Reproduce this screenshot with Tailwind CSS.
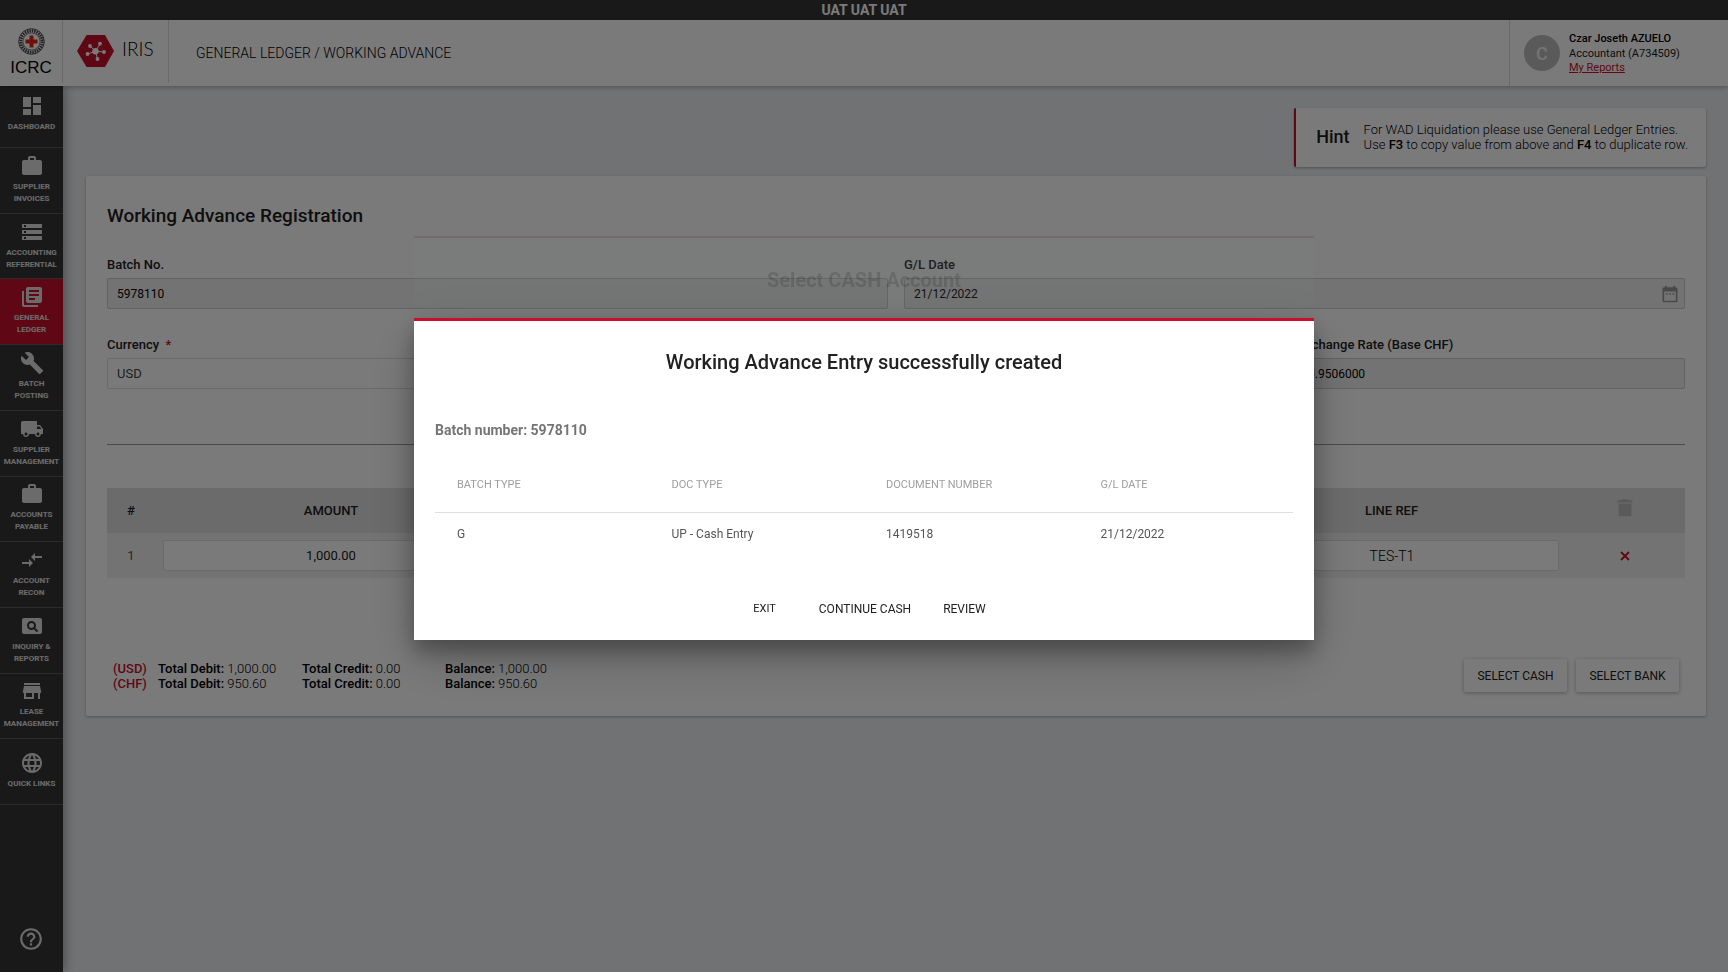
<!DOCTYPE html>
<html lang="en">
<head>
<meta charset="utf-8">
<title>IRIS - Working Advance</title>
<meta name="viewport" content="width=device-width, initial-scale=1">
<script src="https://cdn.jsdelivr.net/npm/@tailwindcss/browser@4"></script>
</head>
<body class="flex min-h-screen flex-col bg-[#edeff3] font-[Roboto,sans-serif] text-[13px] text-[#212121]">

<div class="flex h-5 items-center justify-center bg-[#363636] text-[14px] leading-5 font-bold text-white">UAT UAT UAT</div>

<header class="relative z-10 flex h-[66px] bg-white shadow-[0_1px_5px_rgba(0,0,0,0.3)]">
  <a href="#" class="flex h-[63px] w-[63px] flex-col items-center border-r border-[#dddddd] pt-[8px] text-black" aria-label="ICRC">
    <svg class="h-[27px] w-[27px]" viewBox="0 0 27 27" fill="none">
      <circle cx="13.500" cy="13.500" r="12.800" stroke="#555" stroke-width="1"/>
      <circle cx="13.500" cy="13.500" r="10.700" stroke="#444" stroke-width="3" stroke-dasharray="1.500 0.900"/>
      <circle cx="13.500" cy="13.500" r="8.600" stroke="#555" stroke-width="0.800" fill="#fff"/>
      <path d="M11.500 7.500h4v4h4v4h-4v4h-4v-4h-4v-4h4z" fill="#e2231a"/>
    </svg>
    <span class="mt-[3px] font-['Liberation_Sans',sans-serif] text-[17px] leading-5">ICRC</span>
  </a>
  <a href="#" class="flex h-[63px] w-[106px] items-center gap-[8px] border-r border-[#dddddd] pb-px pl-[14px]">
    <svg class="h-[32px] w-[37px]" viewBox="0 0 37 32">
      <path d="M9.500 0h18.500L37 16l-9 16H9.500L0 16z" fill="#c8102e"/>
      <g stroke="#fff" stroke-width="1"><path d="M18.500 16.200 13 11M18.500 16.200 23 9M18.500 16.200 27 17M18.500 16.200 20.500 24M18.500 16.200 10.500 19"/></g>
      <g fill="#fff"><circle cx="18.500" cy="16.200" r="3.200"/><circle cx="13" cy="11" r="1.900"/><circle cx="23" cy="8.700" r="1.900"/><circle cx="27" cy="17" r="1.900"/><circle cx="20.500" cy="24" r="1.900"/><circle cx="10.500" cy="19" r="1.900"/></g>
    </svg>
    <span class="pb-1 font-[Lato,sans-serif] text-[19px] font-light leading-6 text-black">IRIS</span>
  </a>
  <h1 class="flex flex-1 items-center pl-[27px] text-[14px] font-light text-black">GENERAL LEDGER / WORKING ADVANCE</h1>
  <div class="flex w-[219px] items-center gap-[9px] border-l border-[#dddddd] pl-[14px]">
    <div class="flex h-9 w-9 items-center justify-center rounded-full bg-[#bdbdbd] text-[18px] font-medium text-[#f0f0f0]">C</div>
    <div class="text-[11px] leading-[15px]">
      <div class="font-medium text-black">Czar Joseth AZUELO</div>
      <div>Accountant (A734509)</div>
      <a href="#" class="block leading-[14px] text-[#c8102e] underline">My Reports</a>
    </div>
  </div>
</header>

<div class="flex flex-1">
  <nav class="flex w-[63px] shrink-0 flex-col bg-[#363636] text-center text-[8px] leading-[12px] font-bold text-[#e0e0e0] shadow-[2px_0_10px_rgba(0,0,0,0.35)]">
    <a href="#" class="flex h-[62px] flex-col items-center justify-center gap-[3px] border-b border-[#5a5a5a] pb-[6px]">
      <svg class="h-6 w-6" viewBox="0 0 24 24" fill="currentColor"><path d="M3 13h8V3H3v10zm0 8h8v-6H3v6zm10 0h8V11h-8v10zm0-18v6h8V3h-8z"/></svg>
      DASHBOARD
    </a>
    <div class="flex h-[657px] flex-col">
      <a href="#" class="flex flex-1 flex-col items-center justify-center gap-[3px] border-b border-[#5a5a5a] pb-[2px]">
        <svg class="h-6 w-6" viewBox="0 0 24 24" fill="currentColor"><path d="M20 6h-4V4c0-1.110-.890-2-2-2h-4c-1.110 0-2 .890-2 2v2H4c-1.110 0-1.990.890-1.990 2L2 19c0 1.110.890 2 2 2h16c1.110 0 2-.890 2-2V8c0-1.110-.890-2-2-2zm-6 0h-4V4h4v2z"/></svg>
        <span>SUPPLIER<br>INVOICES</span>
      </a>
      <a href="#" class="flex flex-1 flex-col items-center justify-center gap-[3px] border-b border-[#5a5a5a] pb-[2px]">
        <svg class="h-6 w-6" viewBox="0 0 24 24" fill="currentColor"><path d="M2 20h20v-4H2v4zm2-3h2v2H4v-2zM2 4v4h20V4H2zm4 3H4V5h2v2zm-4 7h20v-4H2v4zm2-3h2v2H4v-2z"/></svg>
        <span>ACCOUNTING<br>REFERENTIAL</span>
      </a>
      <a href="#" class="flex flex-1 flex-col items-center justify-center gap-[3px] border-b border-[#5a5a5a] bg-[#c8102e] pb-[2px]">
        <svg class="h-6 w-6" viewBox="0 0 24 24" fill="currentColor"><path d="M4 6H2v14c0 1.100.9 2 2 2h14v-2H4V6zm16-4H8c-1.100 0-2 .9-2 2v12c0 1.100.9 2 2 2h12c1.100 0 2-.9 2-2V4c0-1.100-.9-2-2-2zm-1 9H9V9h10v2zm-4 4H9v-2h6v2zm4-8H9V5h10v2z"/></svg>
        <span>GENERAL<br>LEDGER</span>
      </a>
      <a href="#" class="flex flex-1 flex-col items-center justify-center gap-[3px] border-b border-[#5a5a5a] pb-[2px]">
        <svg class="h-6 w-6" viewBox="0 0 24 24" fill="currentColor"><path d="M22.700 19l-9.100-9.100c.9-2.300.4-5-1.500-6.900-2-2-5-2.400-7.400-1.300L9 6 6 9 1.600 4.700C.4 7.100.9 10.100 2.900 12.100c1.900 1.900 4.600 2.400 6.900 1.500l9.100 9.100c.4.4 1 .4 1.400 0l2.300-2.300c.5-.4.5-1.100.1-1.400z"/></svg>
        <span>BATCH<br>POSTING</span>
      </a>
      <a href="#" class="flex flex-1 flex-col items-center justify-center gap-[3px] border-b border-[#5a5a5a] pb-[2px]">
        <svg class="h-6 w-6" viewBox="0 0 24 24" fill="currentColor"><path d="M20 8h-3V4H3c-1.100 0-2 .9-2 2v11h2c0 1.660 1.340 3 3 3s3-1.340 3-3h6c0 1.660 1.340 3 3 3s3-1.340 3-3h2v-5l-3-4zM6 18.500c-.83 0-1.500-.67-1.500-1.500s.67-1.500 1.500-1.500 1.500.67 1.500 1.500-.67 1.500-1.500 1.500zm13.500-9l1.960 2.500H17V9.500h2.500zm-1.500 9c-.83 0-1.500-.67-1.500-1.500s.67-1.500 1.500-1.500 1.500.67 1.500 1.500-.67 1.500-1.500 1.500z"/></svg>
        <span>SUPPLIER<br>MANAGEMENT</span>
      </a>
      <a href="#" class="flex flex-1 flex-col items-center justify-center gap-[3px] border-b border-[#5a5a5a] pb-[2px]">
        <svg class="h-6 w-6" viewBox="0 0 24 24" fill="currentColor"><path d="M20 6h-4V4c0-1.110-.890-2-2-2h-4c-1.110 0-2 .890-2 2v2H4c-1.110 0-1.990.890-1.990 2L2 19c0 1.110.890 2 2 2h16c1.110 0 2-.890 2-2V8c0-1.110-.890-2-2-2zm-6 0h-4V4h4v2z"/></svg>
        <span>ACCOUNTS<br>PAYABLE</span>
      </a>
      <a href="#" class="flex flex-1 flex-col items-center justify-center gap-[3px] border-b border-[#5a5a5a] pb-[2px]">
        <svg class="h-6 w-6" viewBox="0 0 24 24" fill="currentColor"><path d="M9.010 14H2v2h7.010v3L13 15l-3.990-4v3zm5.980-1v-3H22V8h-7.010V5L11 9l3.990 4z"/></svg>
        <span>ACCOUNT<br>RECON</span>
      </a>
      <a href="#" class="flex flex-1 flex-col items-center justify-center gap-[3px] border-b border-[#5a5a5a] pb-[2px]">
        <svg class="h-6 w-6" viewBox="0 0 24 24" fill="currentColor"><path d="M11.500 9C10.120 9 9 10.120 9 11.500s1.120 2.500 2.500 2.500 2.500-1.120 2.500-2.500S12.880 9 11.500 9zM20 4H4c-1.100 0-2 .9-2 2v12c0 1.100.9 2 2 2h16c1.100 0 2-.9 2-2V6c0-1.100-.9-2-2-2zm-3.210 14.210l-2.910-2.910c-.69.440-1.510.7-2.390.7C9.010 16 7 13.990 7 11.500S9.010 7 11.500 7 16 9.010 16 11.500c0 .88-.26 1.690-.7 2.390l2.910 2.900-1.420 1.420z"/></svg>
        <span>INQUIRY &amp;<br>REPORTS</span>
      </a>
      <a href="#" class="flex flex-1 flex-col items-center justify-center gap-[3px] border-b border-[#5a5a5a] pb-[2px]">
        <svg class="h-6 w-6" viewBox="0 0 24 24" fill="currentColor"><path d="M20 4H4v2h16V4zm1 10v-2l-1-5H4l-1 5v2h1v6h10v-6h4v6h2v-6h1zm-9 4H6v-4h6v4z"/></svg>
        <span>LEASE<br>MANAGEMENT</span>
      </a>
      <a href="#" class="flex flex-1 flex-col items-center justify-center gap-[3px] border-b border-[#5a5a5a] pb-[2px]">
        <svg class="h-6 w-6" viewBox="0 0 24 24" fill="currentColor"><path d="M11.990 2C6.470 2 2 6.480 2 12s4.470 10 9.990 10C17.520 22 22 17.520 22 12S17.520 2 11.990 2zm6.930 6h-2.950c-.32-1.250-.78-2.450-1.380-3.560 1.840.63 3.370 1.910 4.330 3.560zM12 4.040c.83 1.200 1.480 2.530 1.910 3.960h-3.820c.43-1.430 1.080-2.760 1.910-3.960zM4.260 14C4.100 13.360 4 12.690 4 12s.1-1.360.26-2h3.380c-.08.66-.14 1.320-.14 2s.06 1.340.14 2H4.260zm.82 2h2.950c.32 1.250.78 2.450 1.380 3.560-1.840-.63-3.370-1.900-4.330-3.560zm2.950-8H5.080c.96-1.660 2.490-2.930 4.330-3.560C8.810 5.550 8.350 6.750 8.030 8zM12 19.960c-.83-1.200-1.480-2.530-1.910-3.960h3.820c-.43 1.430-1.080 2.760-1.910 3.960zM14.340 14H9.660c-.09-.66-.16-1.320-.16-2s.07-1.350.16-2h4.680c.09.65.16 1.320.16 2s-.07 1.340-.16 2zm.25 5.560c.6-1.110 1.060-2.310 1.380-3.560h2.950c-.96 1.650-2.490 2.930-4.330 3.560zM16.360 14c.08-.66.14-1.320.14-2s-.06-1.340-.14-2h3.380c.16.64.26 1.310.26 2s-.1 1.360-.26 2h-3.380z"/></svg>
        QUICK LINKS
      </a>
    </div>
    <a href="#" class="mt-auto mb-5 flex justify-center pr-[2px]" aria-label="Help">
      <svg class="h-[26px] w-[26px]" viewBox="0 0 24 24" fill="currentColor"><path d="M11 18h2v-2h-2v2zm1-16C6.480 2 2 6.480 2 12s4.480 10 10 10 10-4.480 10-10S17.520 2 12 2zm0 18c-4.410 0-8-3.590-8-8s3.590-8 8-8 8 3.590 8 8-3.590 8-8 8zm0-14c-2.210 0-4 1.790-4 4h2c0-1.100.9-2 2-2s2 .9 2 2c0 2-3 1.750-3 5h2c0-2.250 3-2.500 3-5 0-2.210-1.790-4-4-4z"/></svg>
    </a>
  </nav>

  <main class="flex flex-1 flex-col gap-[9px] pt-[22px] pr-[22px] pl-[23px]">
    <aside class="flex h-[59px] items-center gap-[14px] self-end rounded-[2px] border-l-2 border-[#c8102e] bg-white pr-[18px] pb-[2px] pl-5 shadow-[0_1px_3px_rgba(0,0,0,0.3)]">
      <strong class="text-[18px] font-medium">Hint</strong>
      <p class="leading-[15px] font-light text-black">For WAD Liquidation please use General Ledger Entries.<br>Use <b class="font-medium">F3</b> to copy value from above and <b class="font-medium">F4</b> to duplicate row.</p>
    </aside>

    <section class="flex flex-col rounded-[2px] bg-white px-[21px] pt-[28px] pb-6 shadow-[0_1px_3px_rgba(0,0,0,0.3)]">
      <h2 class="text-[19px] leading-6 font-medium">Working Advance Registration</h2>

      <form class="mt-[29px] flex flex-col gap-[28px]">
        <div class="grid grid-cols-2 gap-4">
          <div class="flex flex-col gap-[5px]">
            <label for="batch" class="leading-4 font-medium">Batch No.</label>
            <input id="batch" value="5978110" disabled class="h-[31px] w-full rounded-[2px] border border-[#cccccc] bg-[#f0f0f0] px-[9px] text-[12px] text-black">
          </div>
          <div class="flex flex-col gap-[5px]">
            <label for="gldate" class="leading-4 font-medium">G/L Date</label>
            <div class="flex h-[31px] items-center rounded-[2px] border border-[#cccccc] bg-[#f0f0f0] pr-1 pl-[9px]">
              <input id="gldate" value="21/12/2022" disabled class="min-w-0 flex-1 text-[12px] text-black">
              <svg class="h-5 w-5 text-[#9a9a9a]" viewBox="0 0 24 24" fill="currentColor"><path d="M9 11H7v2h2v-2zm4 0h-2v2h2v-2zm4 0h-2v2h2v-2zm2-7h-1V2h-2v2H8V2H6v2H5c-1.110 0-1.990.9-1.990 2L3 20c0 1.100.890 2 2 2h14c1.100 0 2-.9 2-2V6c0-1.100-.9-2-2-2zm0 16H5V9h14v11z"/></svg>
            </div>
          </div>
        </div>
        <div class="grid grid-cols-[1fr_1fr_1fr_387px] gap-4">
          <div class="flex flex-col gap-[5px]">
            <label for="currency" class="leading-4 font-medium">Currency&nbsp; <span class="text-[#c8102e]">*</span></label>
            <select id="currency" class="h-[31px] w-full appearance-none rounded-[2px] border border-[#dddddd] bg-white px-[9px] text-[#444444]"><option>USD</option></select>
          </div>
          <div class="col-start-4 flex flex-col gap-[5px]">
            <label for="rate" class="leading-4 font-medium">Exchange Rate (Base CHF)</label>
            <input id="rate" value="0.9506000" disabled class="h-[31px] w-full rounded-[2px] border border-[#cccccc] bg-[#f0f0f0] px-[9px] text-[12px] text-black">
          </div>
        </div>
      </form>

      <hr class="mt-[55px] border-[#999999]">

      <table class="mt-[43px] w-full table-fixed border-collapse text-center">
        <colgroup><col class="w-[48px]"><col class="w-[352px]"><col><col class="w-[345px]"><col class="w-[121px]"></colgroup>
        <thead>
          <tr class="h-[45px] bg-[#e0e0e0]">
            <th class="font-medium">#</th>
            <th class="font-medium">AMOUNT</th>
            <th></th>
            <th class="font-medium">LINE REF</th>
            <th class="pb-[6px]"><svg class="mx-auto h-[22px] w-[22px] text-[#bdbdbd]" viewBox="0 0 24 24" fill="currentColor"><path d="M5 21h14V7H5v14zM20 3.500h-4l-1-1H9l-1 1H4V6h16z"/></svg></th>
          </tr>
        </thead>
        <tbody>
          <tr class="h-[45px] bg-[#f1f1f1]">
            <td class="text-[#555555]">1</td>
            <td class="pl-2"><input aria-label="Amount" value="1,000.00" class="h-[31px] w-full rounded-[2px] border border-[#dddddd] bg-white pr-[8px] text-center"></td>
            <td></td>
            <td class="pl-[6px] pr-[5px]"><input aria-label="Line ref" value="TES-T1" class="h-[31px] w-full rounded-[2px] border border-[#dddddd] bg-white text-center text-[14px] font-light text-black"></td>
            <td><button type="button" aria-label="Remove line" class="align-middle text-[#c8102e]"><svg class="h-[10px] w-[10px]" viewBox="0 0 10 10" fill="none" stroke="currentColor" stroke-width="1.800"><path d="M1 1l8 8M9 1l-8 8"/></svg></button></td>
          </tr>
        </tbody>
      </table>

      <div class="mt-[81px] flex items-center justify-between pr-[6px] pl-[6px]">
        <div class="grid grid-cols-[45px_144px_143px_auto] leading-[15px] font-light text-black">
          <b class="font-medium text-[#c8102e]">(USD)</b><span><b class="font-medium">Total Debit:</b> 1,000.00</span><span><b class="font-medium">Total Credit:</b> 0.00</span><span><b class="font-medium">Balance:</b> 1,000.00</span>
          <b class="font-medium text-[#c8102e]">(CHF)</b><span><b class="font-medium">Total Debit:</b> 950.60</span><span><b class="font-medium">Total Credit:</b> 0.00</span><span><b class="font-medium">Balance:</b> 950.60</span>
        </div>
        <div class="flex gap-[9px]">
          <button type="button" class="h-[33px] w-[103px] rounded-[2px] bg-white text-[12px] shadow-[0_1px_4px_rgba(0,0,0,0.3)]">SELECT CASH</button>
          <button type="button" class="h-[33px] w-[103px] rounded-[2px] bg-white text-[12px] shadow-[0_1px_4px_rgba(0,0,0,0.3)]">SELECT BANK</button>
        </div>
      </div>
    </section>
  </main>
</div>

<!-- Backdrop with the closing cash dialog and the confirmation dialog -->
<div class="fixed inset-0 z-20 bg-black/52"></div>
<div class="fixed inset-x-0 top-[236px] z-20 flex justify-center">
  <div class="h-[82px] w-[900px] border-t-2 border-[#5a2835]/20 bg-[#7a807e]/15 pt-[30px] text-center text-[20px] leading-6 font-bold text-black/15">Select CASH Account</div>
</div>
<div class="fixed inset-0 z-30 flex items-center justify-center pb-[14px]">
  <div role="dialog" aria-labelledby="dlg" class="w-[900px] max-w-full border-t-[3px] border-[#c8102e] bg-white px-[21px] pt-[29px] pb-4 shadow-[0_11px_20px_rgba(0,0,0,0.3),0_20px_50px_rgba(0,0,0,0.2)]">
    <h2 id="dlg" class="text-center text-[20px] leading-6 font-medium">Working Advance Entry successfully created</h2>
    <p class="mt-[46px] text-[14px] leading-5 font-bold text-[#757575]">Batch number: 5978110</p>
    <table class="mt-[19px] w-full table-fixed border-collapse text-left">
      <thead>
        <tr class="h-[53px] border-b border-[#e0e0e0] text-[11px] text-[#9e9e9e]">
          <th class="pl-[22px] font-normal">BATCH TYPE</th><th class="pl-[22px] font-normal">DOC TYPE</th><th class="pl-[22px] font-normal">DOCUMENT NUMBER</th><th class="pl-[22px] font-normal">G/L DATE</th>
        </tr>
      </thead>
      <tbody>
        <tr class="h-[44px] text-[12px] text-[#555555]">
          <td class="pl-[22px]">G</td><td class="pl-[22px]">UP - Cash Entry</td><td class="pl-[22px]">1419518</td><td class="pl-[22px]">21/12/2022</td>
        </tr>
      </tbody>
    </table>
    <div class="mt-[38px] flex h-[30px] items-center justify-center pl-[11px] text-[12px]">
      <button type="button" class="mr-[43px] text-[11px]">EXIT</button>
      <button type="button" class="mr-8">CONTINUE CASH</button>
      <button type="button">REVIEW</button>
    </div>
  </div>
</div>
</body>
</html>
